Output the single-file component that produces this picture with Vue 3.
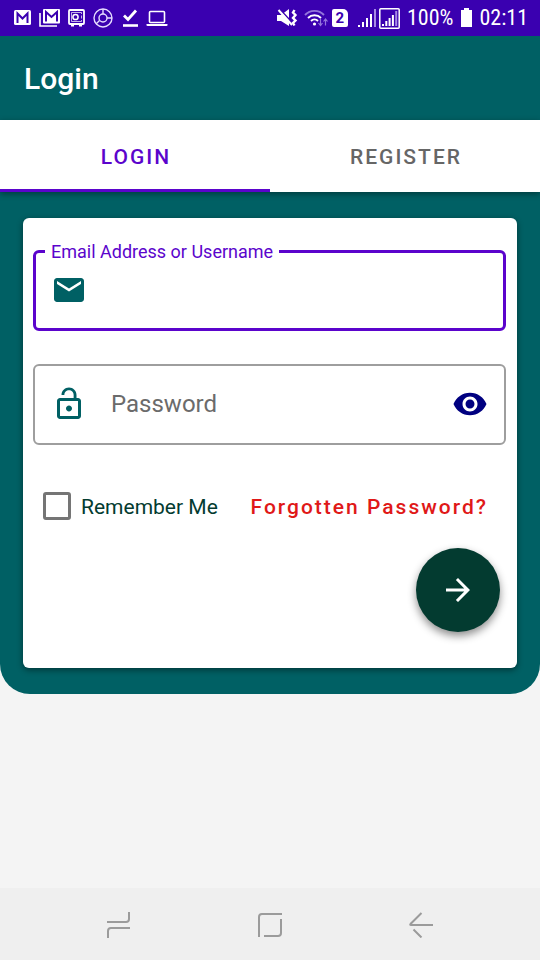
<script setup>
import { ref } from 'vue'

const tabs = ['Login', 'Register']
const activeTab = ref('Login')
const username = ref('')
const password = ref('')
const showPassword = ref(false)
const remember = ref(false)
</script>

<template>
  <div class="screen">
    <div class="status">
      <div class="status-group notices">
        <svg width="17" height="16" viewBox="0 0 17 16"><rect width="17" height="15" rx="1.500" fill="#fff" /><path d="M3.500 13V3.500l5 5 5-5V13" fill="none" stroke="#3a00b0" stroke-width="2" /></svg>
        <svg width="21" height="18" viewBox="0 0 21 18"><path d="M1 4v13h17" fill="none" stroke="#fff" stroke-width="1.600" /><rect x="4" width="17" height="14.500" rx="1" fill="#fff" /><path d="M7 12.500V3l5.500 5L18 3v9.500" fill="none" stroke="#3a00b0" stroke-width="2" /></svg>
        <svg width="17" height="18" viewBox="0 0 17 18" fill="none" stroke="#fff"><rect x="1" y="1" width="15" height="14" rx="1" stroke-width="1.800" /><path d="M3 16.500h3M11 16.500h3" stroke-width="2" /><circle cx="7.500" cy="8" r="2.600" stroke-width="1.500" /><path d="M3.500 3.500h10v1.500M3.500 12.500h10V11M3.500 3.500v9M13.500 6.500v3" stroke-width="1" opacity=".7" /></svg>
        <svg width="20" height="20" viewBox="0 0 20 20" fill="none" stroke="#e6dcff" stroke-width="1.400"><circle cx="10" cy="10" r="9" /><circle cx="10" cy="10" r="4" /><path d="M10 1v5M14 10h5M6.500 12.500L3 16" /></svg>
        <svg width="17" height="18" viewBox="0 0 17 18" fill="none" stroke="#fff"><path d="M3 6.500l4 4L15 1.500" stroke-width="2.800" /><path d="M2 16.500h15" stroke-width="2.600" /></svg>
        <svg width="22" height="18" viewBox="0 0 22 18"><rect x="3.500" y="2.500" width="15" height="11" rx="1" fill="none" stroke="#fff" stroke-width="1.600" /><path d="M.5 15h21v1.500l-1 .5h-19l-1-.5z" fill="#fff" /></svg>
      </div>
      <div class="status-group system">
        <svg width="23" height="20" viewBox="0 0 23 20"><path d="M0 7h4l8-6v17l-8-5H0z" fill="#fff" /><path d="M3 1.500L16 15.500" stroke="#3a00b0" stroke-width="1.800" /><path d="M1.500 2L15 17" stroke="#fff" stroke-width="2" /><path d="M17.500 2l-1.500 2.500 2.500 2.500-2.500 3 2.500 2.500-2.500 2.500 1.500 2.500" fill="none" stroke="#fff" stroke-width="2.400" /></svg>
        <svg width="26" height="20" viewBox="0 0 26 20" fill="none" stroke-width="1.900"><path d="M2 7a13 13 0 0 1 19 0" stroke="#9474dc" /><path d="M5 10a9 9 0 0 1 13 0M8 13a5 5 0 0 1 7 0" stroke="#fff" /><circle cx="11.500" cy="16" r="1.600" fill="#fff" /><path d="M17.500 11v6M15.500 15l2 2.500 2-2.500M22.500 17.500v-6M20.500 13.500l2-2.500 2 2.500" stroke="#9474dc" stroke-width="1.200" /></svg>
        <span class="sim">2</span>
        <svg width="18" height="18" viewBox="0 0 18 18" stroke="#fff" stroke-width="2"><path d="M1 18v-2M5 18v-5M9 18V9M13 18V5" /><path d="M17 18V0" stroke="#a68ae3" /></svg>
        <svg width="21" height="21" viewBox="0 0 21 21" fill="none" stroke="#fff"><rect x=".8" y=".8" width="19.400" height="19.400" rx="1" stroke-width="1.500" /><path d="M4 18v-2M7.300 18v-5M10.600 18V10M13.900 18V7" stroke-width="2" /><path d="M17.200 18V3" stroke="#a68ae3" stroke-width="2" /></svg>
        <span class="battery-level">100%</span>
        <svg width="13" height="20" viewBox="0 0 13 20"><path d="M4 0h5v2h3v17H1V2h3z" fill="#fff" /></svg>
        <time>02:11</time>
      </div>
    </div>

    <div class="panel">
      <header class="app-bar"><h1>Login</h1></header>

      <nav class="tabs">
        <button
          v-for="tab in tabs"
          :key="tab"
          type="button"
          class="tab"
          :class="{ active: tab === activeTab }"
          @click="activeTab = tab"
        >{{ tab }}</button>
      </nav>

      <main class="content">
        <form class="card" @submit.prevent>
          <fieldset class="field-email">
            <legend><label for="username">Email Address or Username</label></legend>
            <div class="email-row">
              <svg class="icon teal" viewBox="0 0 24 24"><path d="M20 4H4c-1.100 0-1.990.9-1.990 2L2 18c0 1.100.9 2 2 2h16c1.100 0 2-.9 2-2V6c0-1.100-.9-2-2-2zm0 4l-8 5-8-5V6l8 5 8-5v2z" /></svg>
              <input id="username" v-model="username" type="text" autocomplete="username">
            </div>
          </fieldset>

          <div class="field-password">
            <svg class="icon teal" viewBox="0 0 24 24"><path d="M12 17c1.100 0 2-.9 2-2s-.9-2-2-2-2 .9-2 2 .9 2 2 2zm6-9h-1V6c0-2.760-2.240-5-5-5S7 3.240 7 6h1.900c0-1.710 1.390-3.100 3.100-3.100s3.100 1.390 3.100 3.100v2H6c-1.100 0-2 .9-2 2v10c0 1.100.9 2 2 2h12c1.100 0 2-.9 2-2V10c0-1.100-.9-2-2-2zm0 12H6V10h12v10z" /></svg>
            <input
              v-model="password"
              :type="showPassword ? 'text' : 'password'"
              placeholder="Password"
              aria-label="Password"
            >
            <button type="button" class="reveal" aria-label="Show password" @click="showPassword = !showPassword">
              <svg class="icon navy" viewBox="0 0 24 24"><path d="M12 4.500C7 4.500 2.730 7.610 1 12c1.730 4.390 6 7.500 11 7.500s9.270-3.110 11-7.500c-1.730-4.390-6-7.500-11-7.500zM12 17c-2.760 0-5-2.240-5-5s2.240-5 5-5 5 2.240 5 5-2.240 5-5 5zm0-8c-1.660 0-3 1.340-3 3s1.340 3 3 3 3-1.340 3-3-1.340-3-3-3z" /></svg>
            </button>
          </div>

          <div class="options">
            <label class="remember">
              <input v-model="remember" type="checkbox">
              <span>Remember Me</span>
            </label>
            <a href="#" class="forgot">Forgotten Password?</a>
          </div>

          <button type="submit" class="fab" aria-label="Login">
            <svg class="icon" viewBox="0 0 24 24"><path d="M12 4l-1.410 1.410L16.170 11H4v2h12.170l-5.580 5.590L12 20l8-8z" fill="#fff" /></svg>
          </button>
        </form>
      </main>
    </div>

    <div class="system-nav">
      <button type="button" aria-label="Recents">
        <svg width="24" height="26" viewBox="0 0 24 26"><path d="M0 10h19q3 0 3-3V0M23 16H4q-3 0-3 3v7" /></svg>
      </button>
      <button type="button" aria-label="Home">
        <svg width="24" height="24" viewBox="0 0 24 24"><path d="M1 24V4q0-3 3-3h20M23 6v14q0 3-3 3H6" /></svg>
      </button>
      <button type="button" aria-label="Back">
        <svg width="24" height="26" viewBox="0 0 24 26"><path d="M12.500 1L1.500 12q-.8 1 .5 1H24M4.500 17.500l8 8" /></svg>
      </button>
    </div>
  </div>
</template>

<style>
body {
  margin: 0;
  background: #f4f4f4;
}
</style>

<style scoped>
.screen {
  display: flex;
  flex-direction: column;
  min-height: 100vh;
  font-family: Roboto, "Noto Sans", sans-serif;
  background: #f4f4f4;
}

button,
input {
  font-family: inherit;
}

button {
  padding: 0;
  border: 0;
  background: none;
  cursor: pointer;
}

svg {
  display: block;
  flex: none;
}

.status {
  display: flex;
  justify-content: space-between;
  height: 36px;
  padding: 0 12px 0 14px;
  background: #3a00b0;
  color: #fff;
  font-family: "Roboto Condensed", Roboto, sans-serif;
  font-size: 22px;
  line-height: 28px;
}

.status-group {
  display: flex;
  align-items: center;
}

.notices {
  gap: 8px;
}

.system {
  gap: 3px;
}

.system time {
  margin-left: 3px;
}

.sim {
  width: 16px;
  height: 18px;
  margin-right: 7px;
  border-radius: 2px 5px 2px 2px;
  background: #fff;
  color: #3a00b0;
  font-family: Roboto, sans-serif;
  font-size: 15px;
  font-weight: 700;
  line-height: 18px;
  text-align: center;
}

.battery-level {
  margin: 0 4px;
}

.panel {
  border-radius: 0 0 30px 30px;
  background: #006064;
}

.app-bar {
  display: flex;
  align-items: center;
  height: 84px;
  padding: 0 24px;
}

h1 {
  margin: 0;
  color: #fff;
  font-size: 30px;
  font-weight: 500;
}

.tabs {
  display: grid;
  grid-template-columns: 1fr 1fr;
  height: 72px;
  background: #fff;
  box-shadow: 0 2px 6px rgba(0, 0, 0, 0.4);
}

.tab {
  padding: 2px 0 0 2px;
  border-top: 3px solid transparent;
  border-bottom: 3px solid transparent;
  color: #666;
  font-size: 21px;
  font-weight: 500;
  letter-spacing: 2px;
  text-transform: uppercase;
}

.tab.active {
  border-bottom-color: #5b04cc;
  color: #5b04cc;
}

.content {
  padding: 26px 23px;
}

.card {
  display: flex;
  flex-direction: column;
  padding: 23px 11px 36px 10px;
  border-radius: 6px;
  background: #fff;
  box-shadow: 0 2px 6px rgba(0, 0, 0, 0.45);
}

.field-email {
  min-width: 0;
  margin: 0;
  padding: 0 9px 20px;
  border: 3px solid #5b04cc;
  border-radius: 6px;
}

legend {
  padding: 0 6px;
  color: #5b04cc;
  font-size: 18px;
  line-height: 21px;
}

legend label {
  display: block;
}

.email-row {
  display: flex;
  align-items: center;
  gap: 24px;
  padding: 10px 6px 0;
}

.field-password {
  display: flex;
  align-items: center;
  gap: 24px;
  height: 75px;
  margin-top: 33px;
  padding: 0 16px 2px;
  border: 2px solid #9e9e9e;
  border-radius: 6px;
}

.email-row input,
.field-password input {
  flex: 1;
  min-width: 0;
  height: 36px;
  padding: 0;
  border: 0;
  outline: 0;
  background: transparent;
  color: #212121;
  font-size: 24px;
}

input::placeholder {
  color: #6b6b6b;
  opacity: 1;
}

.icon {
  width: 36px;
  height: 36px;
}

.teal {
  fill: #006064;
}

.navy {
  fill: #000080;
}

.options {
  display: flex;
  align-items: center;
  justify-content: space-between;
  height: 72px;
  margin-top: 25px;
  padding: 0 18px 0 10px;
  font-size: 21px;
  line-height: 24px;
}

.remember span,
.forgot {
  padding-top: 2px;
}

.remember {
  display: flex;
  align-items: center;
  gap: 10px;
  color: #033b30;
}

.remember input {
  appearance: none;
  width: 28px;
  height: 28px;
  margin: 0;
  border: 3px solid #757575;
  border-radius: 3px;
}

.remember input:checked {
  background: #033b30;
}

.forgot {
  color: #e01818;
  font-weight: 500;
  letter-spacing: 2px;
  text-decoration: none;
}

.fab {
  display: grid;
  place-items: center;
  align-self: flex-end;
  width: 84px;
  height: 84px;
  margin: 6px 6px 0 0;
  border-radius: 50%;
  background: #033b30;
  box-shadow: 0 4px 8px rgba(0, 0, 0, 0.45);
}

.system-nav {
  display: grid;
  grid-template-columns: repeat(3, 1fr);
  height: 72px;
  margin-top: auto;
  padding: 1px 43px 0;
  box-sizing: border-box;
  background: #efefef;
}

.system-nav button {
  display: grid;
  place-items: center;
}

.system-nav path {
  fill: none;
  stroke: #9b9b9b;
  stroke-width: 2;
}
</style>
